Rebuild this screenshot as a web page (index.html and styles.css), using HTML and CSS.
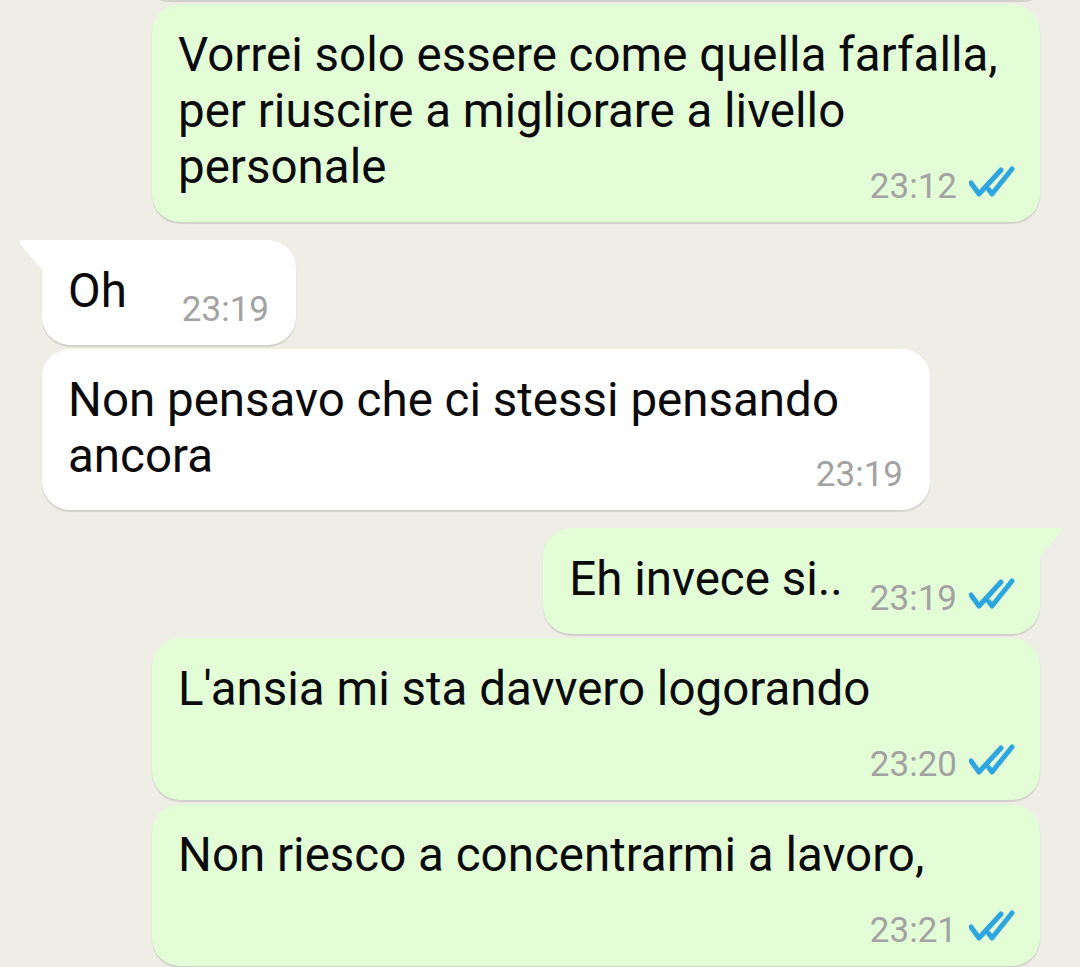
FILE: index.html
```html
<!DOCTYPE html>
<html lang="it">
<head>
    <meta charset="UTF-8">
    <meta name="viewport" content="width=device-width, initial-scale=1.0">
    <title>Chat</title>
    <link rel="stylesheet" href="styles.css">
</head>
<body>

    <div class="chat">
        <!-- bottom edge of the previous message -->
        <div class="msg out prev"></div>

        <div class="msg out">
            <span class="text">Vorrei solo essere come quella farfalla, per riuscire a migliorare a livello personale</span>
            <span class="meta"><span class="time">23:12</span><svg class="ticks" viewBox="0 0 46 32"><path d="M2 17 L10 28 L32 4 M20 24 L23 28 L43 3"/></svg></span>
        </div>

        <div class="msg in first tail">
            <span class="text">Oh</span>
            <span class="meta"><span class="time">23:19</span></span>
        </div>
        <div class="msg in">
            <span class="text">Non pensavo che ci stessi pensando ancora</span>
            <span class="meta"><span class="time">23:19</span></span>
        </div>

        <div class="msg out first tail">
            <span class="text">Eh invece si..</span>
            <span class="meta"><span class="time">23:19</span><svg class="ticks" viewBox="0 0 46 32"><path d="M2 17 L10 28 L32 4 M20 24 L23 28 L43 3"/></svg></span>
        </div>
        <div class="msg out">
            <span class="text">L'ansia mi sta davvero logorando</span>
            <span class="meta"><span class="time">23:20</span><svg class="ticks" viewBox="0 0 46 32"><path d="M2 17 L10 28 L32 4 M20 24 L23 28 L43 3"/></svg></span>
        </div>
        <div class="msg out">
            <span class="text">Non riesco a concentrarmi a lavoro,</span>
            <span class="meta"><span class="time">23:21</span><svg class="ticks" viewBox="0 0 46 32"><path d="M2 17 L10 28 L32 4 M20 24 L23 28 L43 3"/></svg></span>
        </div>
    </div>

</body>
</html>
```

FILE: styles.css
```css
* {
    box-sizing: border-box;
    margin: 0;
    padding: 0;
}

body {
    font-family: Roboto, "Noto Sans", sans-serif;
    background-color: #eeede6;
    height: 967px;
    overflow: hidden;
}

.chat {
    display: flex;
    flex-direction: column;
    padding: 0 40px 0 42px;
}

.msg {
    position: relative;
    max-width: 888px;
    padding: 23px 25px 15px 26px;
    border-radius: 28px;
    box-shadow: 0 2px 1px rgba(0, 0, 0, 0.12);
    margin-top: 4px;
}

.msg.first {
    margin-top: 18px;
}

.msg.out {
    align-self: flex-end;
    background-color: #e3fdd7;
}

.msg.in {
    align-self: flex-start;
    background-color: #fff;
    padding-right: 27px;
}

.msg.prev {
    width: 888px;
    height: 30px;
    padding: 0;
    margin-top: -30px;
}

.text {
    font-size: 47.5px;
    line-height: 56px;
    color: #0a0a0a;
}

.meta {
    float: right;
    margin-top: 27px;
    margin-left: 27px;
    line-height: 40px;
    font-size: 35px;
    color: #a2a2a2;
    white-space: nowrap;
}

.msg.in .meta {
    margin-left: 55px;
}

.ticks {
    width: 46px;
    height: 32px;
    margin-left: 12px;
    vertical-align: 0;
    fill: none;
    stroke: #2da5df;
    stroke-width: 5;
    stroke-linecap: round;
    stroke-linejoin: round;
}

/* little tail on the first message of a group */
.msg.tail.in {
    border-top-left-radius: 0;
}

.msg.tail.out {
    border-top-right-radius: 0;
}

.msg.tail::before {
    content: "";
    position: absolute;
    top: 0;
    width: 25px;
    height: 32px;
}

.msg.tail.in::before {
    left: -23px;
    background-color: #fff;
    clip-path: polygon(4% 0, 100% 0, 100% 100%, 0 8%);
}

.msg.tail.out::before {
    right: -22px;
    background-color: #e3fdd7;
    clip-path: polygon(0 0, 96% 0, 100% 8%, 0 100%);
}
```
